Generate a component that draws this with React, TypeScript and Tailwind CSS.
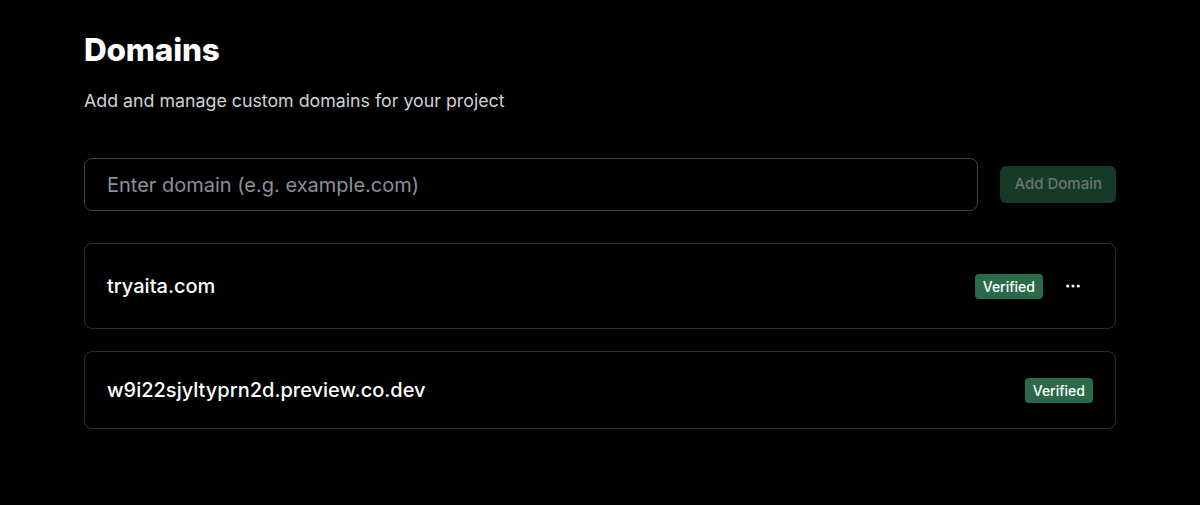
const domains = [
  { name: "tryaita.com", verified: true, menu: true },
  { name: "w9i22sjyltyprn2d.preview.co.dev", verified: true, menu: false },
];

const App = () => {
  return (
    <div className="min-h-screen bg-black text-white font-['Inter',sans-serif] px-[84px] pt-[31px]">
      <h1 className="text-[31.5px] font-extrabold leading-[38px] tracking-[-0.2px]">Domains</h1>
      <p className="mt-[20px] text-[17.8px] leading-6 text-[#cfd2d7]">
        Add and manage custom domains for your project
      </p>

      <div className="mt-[45px] flex items-center gap-[22px]">
        <input
          type="text"
          placeholder="Enter domain (e.g. example.com)"
          className="flex-1 h-[53px] rounded-lg border border-[#3a4150] bg-black px-[22px] text-[20px] text-white placeholder:text-[#8b909a] outline-none"
        />
        <button className="h-[37px] px-[14px] rounded-md bg-[#163a27] text-[15px] font-medium text-[#6b756f]">
          Add Domain
        </button>
      </div>

      <div className="mt-[32px] flex flex-col gap-[22px]">
        {domains.map((d) => (
          <div
            key={d.name}
            className="flex items-center justify-between rounded-lg border border-[#2b2d31] pl-[22px] pr-[22px] py-[24px]"
          >
            <span className="text-[20px] font-medium leading-[28px]">{d.name}</span>
            <div className="flex items-center gap-[10px]">
              {d.verified && (
                <span className="rounded-[4px] bg-[#2a6a4b] px-[8px] py-[3px] text-[14px] font-medium leading-[19px] text-white">
                  Verified
                </span>
              )}
              {d.menu && (
                <button className="flex h-[36px] w-[40px] items-center justify-center rounded-md">
                  <svg width="14" height="4" viewBox="0 0 14 4" fill="white">
                    <circle cx="1.7" cy="2" r="1.6" />
                    <circle cx="7" cy="2" r="1.6" />
                    <circle cx="12.3" cy="2" r="1.6" />
                  </svg>
                </button>
              )}
            </div>
          </div>
        ))}
      </div>
    </div>
  );
};

export default App;
